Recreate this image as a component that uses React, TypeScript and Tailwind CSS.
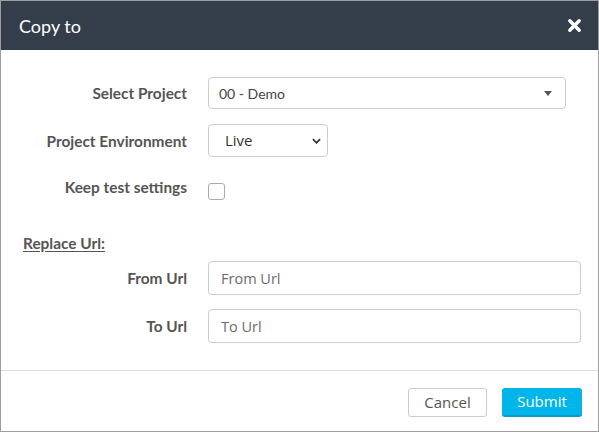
import React from 'react';

const lato = { fontFamily: 'Lato, "Liberation Sans", sans-serif' };
const sans = { fontFamily: '"Open Sans", "Noto Sans", sans-serif' };

function Label({ children, className = '' }: { children: React.ReactNode; className?: string }) {
  return (
    <div className={`w-[186px] shrink-0 text-right text-[15.4px] font-bold text-[#555] leading-[18px] ${className}`}>
      {children}
    </div>
  );
}

export default function App() {
  return (
    <div className="w-[599px] h-[432px] bg-white border border-[#9e9e9e] flex flex-col overflow-hidden" style={lato}>
      {/* header */}
      <div className="h-[49px] bg-[#343e4a] flex items-center justify-between pl-[18px] pr-[16px] shrink-0">
        <h4 className="text-white text-[18px] leading-none">Copy to</h4>
        <button className="w-[15px] h-[15px] flex items-center justify-center">
          <svg viewBox="0 0 16 16" className="w-[15px] h-[15px]">
            <path d="M3 3 L13 13 M13 3 L3 13" stroke="#fff" strokeWidth="3.6" strokeLinecap="round" />
          </svg>
        </button>
      </div>

      {/* body */}
      <div className="flex-1 flex flex-col">
        <div className="mt-[27px] flex items-center h-[32px]">
          <Label>Select Project</Label>
          <div className="ml-[21px] w-[358px] h-[32px] border border-[#ccc] rounded-[4px] flex items-center justify-between pl-[10px] pr-[13px]">
            <span className="text-[14px] text-[#444]">00 - Demo</span>
            <svg viewBox="0 0 8 5" className="w-[8px] h-[5px]">
              <path d="M0 0 L8 0 L4 5 Z" fill="#555" />
            </svg>
          </div>
        </div>

        <div className="mt-[15px] flex items-center h-[33px]">
          <Label>Project Environment</Label>
          <div className="ml-[21px] w-[120px] h-[33px] border border-[#ccc] rounded-[4px] flex items-center justify-between pl-[16px] pr-[6px]">
            <span className="text-[15px] text-[#333]" style={sans}>Live</span>
            <svg viewBox="0 0 10 6" className="w-[9px] h-[6px]">
              <path d="M1 1 L5 5 L9 1" stroke="#333" strokeWidth="2" fill="none" />
            </svg>
          </div>
        </div>

        <div className="mt-[21px] flex items-start">
          <Label>Keep test settings</Label>
          <div className="ml-[21px] mt-[5px] w-[17px] h-[17px] border border-[#aaa] rounded-[3px] bg-white" />
        </div>

        <div className="mt-[34px] pl-[22px] text-[15.4px] font-bold text-[#555] leading-[18px]">
          <span className="underline underline-offset-2">Replace Url:</span>
        </div>

        <div className="mt-[9px] flex items-center h-[34px]">
          <Label>From Url</Label>
          <input
            placeholder="From Url"
            className="ml-[21px] w-[373px] h-[34px] border border-[#ccc] rounded-[4px] px-[12px] text-[14.5px] text-[#333] placeholder:text-[#6b6b6b] outline-none"
            style={sans}
          />
        </div>

        <div className="mt-[14px] flex items-center h-[34px]">
          <Label>To Url</Label>
          <input
            placeholder="To Url"
            className="ml-[21px] w-[373px] h-[34px] border border-[#ccc] rounded-[4px] px-[12px] text-[14.5px] text-[#333] placeholder:text-[#6b6b6b] outline-none"
            style={sans}
          />
        </div>
      </div>

      {/* footer */}
      <div className="h-[61px] shrink-0 border-t border-[#ddd] flex items-start justify-end gap-[15px] pt-[17px] pr-[16px]" style={sans}>
        <button className="w-[79px] h-[29px] border border-[#ccc] rounded-[3px] bg-white text-[15px] text-[#555]">
          Cancel
        </button>
        <button className="w-[80px] h-[29px] rounded-[3px] bg-[#00b5e9] border-b-2 border-[#0a9cc7] text-[15px] text-white">
          Submit
        </button>
      </div>
    </div>
  );
}
